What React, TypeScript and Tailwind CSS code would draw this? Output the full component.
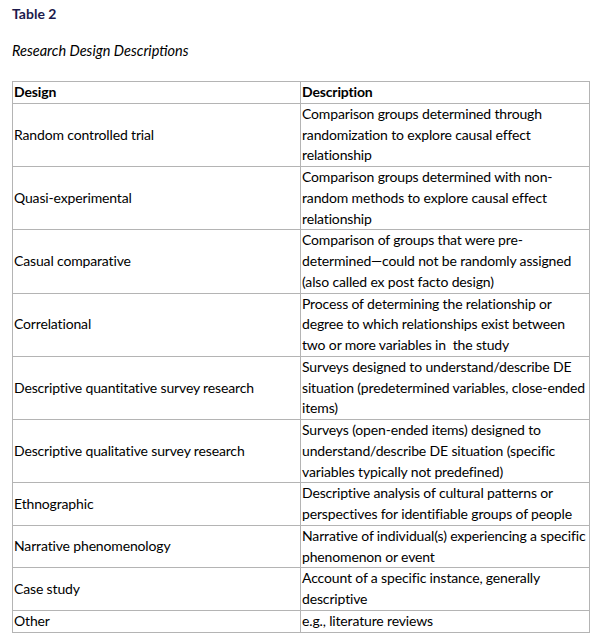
import React from "react";

type Row = { design: string; desc: string[] };

const rows: Row[] = [
  { design: "Random controlled trial", desc: ["Comparison groups determined through", "randomization to explore causal effect", "relationship"] },
  { design: "Quasi-experimental", desc: ["Comparison groups determined with non-", "random methods to explore causal effect", "relationship"] },
  { design: "Casual comparative", desc: ["Comparison of groups that were pre-", "determined\u2014could not be randomly assigned", "(also called ex post facto design)"] },
  { design: "Correlational", desc: ["Process of determining the relationship or", "degree to which relationships exist between", "two or more variables in  the study"] },
  { design: "Descriptive quantitative survey research", desc: ["Surveys designed to understand/describe DE", "situation (predetermined variables, close-ended", "items)"] },
  { design: "Descriptive qualitative survey research", desc: ["Surveys (open-ended items) designed to", "understand/describe DE situation (specific", "variables typically not predefined)"] },
  { design: "Ethnographic", desc: ["Descriptive analysis of cultural patterns or", "perspectives for identifiable groups of people"] },
  { design: "Narrative phenomenology", desc: ["Narrative of individual(s) experiencing a specific", "phenomenon or event"] },
  { design: "Case study", desc: ["Account of a specific instance, generally", "descriptive"] },
  { design: "Other", desc: ["e.g., literature reviews"] },
];

export default function App() {
  return (
    <div
      className="w-[596px] h-[644px] bg-white text-black text-[14px] tracking-[-0.15px] leading-[21px] overflow-hidden"
      style={{ fontFamily: "Lato, 'Open Sans', sans-serif" }}
    >
      <div className="pl-[12px] pt-[3px] font-bold text-[#1c1a4c] tracking-normal">Table 2</div>
      <div className="pl-[12px] pt-[16px] italic text-[14.5px] tracking-normal">Research Design Descriptions</div>
      <table className="ml-[12px] mt-[20px] w-[577px] table-fixed border-collapse leading-[20.75px]">
        <colgroup>
          <col className="w-[288px]" />
          <col className="w-[289px]" />
        </colgroup>
        <thead>
          <tr>
            <th className="border border-[#b4b4b4] px-[1px] py-0 text-left font-bold align-top">Design</th>
            <th className="border border-[#b4b4b4] px-[1px] py-0 text-left font-bold align-top">Description</th>
          </tr>
        </thead>
        <tbody>
          {rows.map((r) => (
            <tr key={r.design}>
              <td className="border border-[#b4b4b4] px-[1px] py-0 align-middle whitespace-nowrap">{r.design}</td>
              <td className="border border-[#b4b4b4] px-[1px] py-0 align-top whitespace-pre">
                {r.desc.map((l, i) => (
                  <div key={i}>{l}</div>
                ))}
              </td>
            </tr>
          ))}
        </tbody>
      </table>
    </div>
  );
}
